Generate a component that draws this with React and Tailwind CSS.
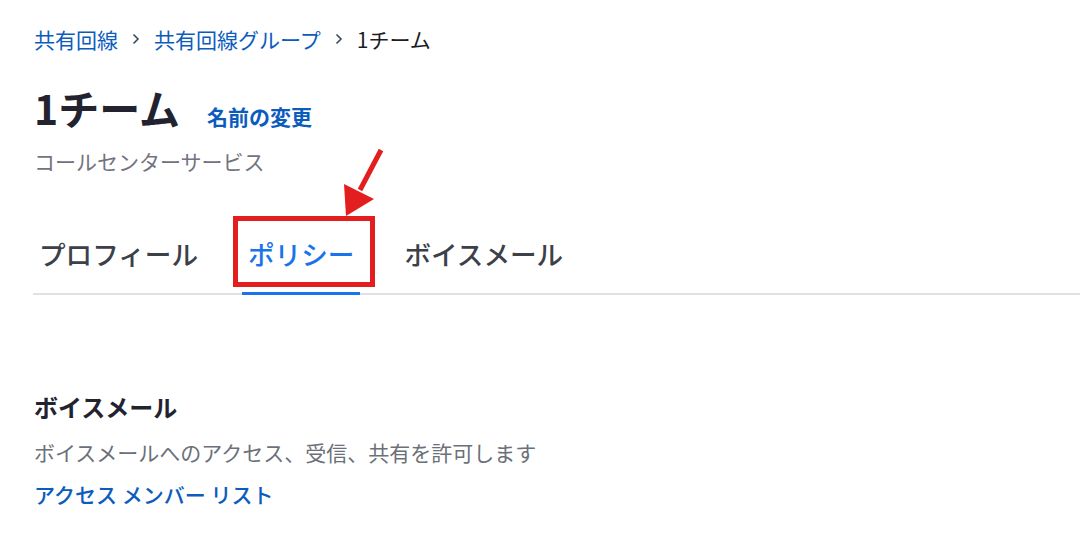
// App.jsx
import React from "react";

const Chevron = () => (
  <svg width="8" height="12" viewBox="0 0 8 12" className="mx-[14px] shrink-0">
    <path d="M1.5 1.5 L6 6 L1.5 10.5" fill="none" stroke="#3d4a5c" strokeWidth="1.6" />
  </svg>
);

const tabs = [
  { label: "プロフィール", active: false },
  { label: "ポリシー", active: true },
  { label: "ボイスメール", active: false },
];

const App = () => {
  return (
    <div
      className="relative w-[1080px] h-[546px] overflow-hidden bg-white"
      style={{ fontFamily: '"Noto Sans CJK JP", "Noto Sans", sans-serif' }}
    >
      <div className="pt-[24px] pl-[34px]">
        {/* breadcrumb */}
        <nav className="flex items-center text-[21px] leading-[30px]">
          <span className="text-[#0b5cbd]">共有回線</span>
          <Chevron />
          <span className="text-[#0b5cbd]">共有回線グループ</span>
          <Chevron />
          <span className="text-[#1d1d1f]">1チーム</span>
        </nav>

        {/* title */}
        <div className="mt-[29px] flex items-baseline gap-[27px]">
          <h1 className="text-[41px] leading-[48px] font-bold text-[#23232f]">1チーム</h1>
          <span className="text-[21px] font-semibold text-[#0b5cbd]">名前の変更</span>
        </div>
        <p className="mt-[13px] text-[21px] leading-[30px] text-[#737380]">コールセンターサービス</p>

        {/* tabs */}
        <div className="mt-[60px] flex gap-[38px] border-b-2 border-[#dfe1e5] -ml-[1px]">
          {tabs.map((t) => (
            <div
              key={t.label}
              className={
                t.active
                  ? "-mb-[2px] px-[6px] pb-[20px] border-b-[3px] border-[#1a73e8] text-[26.6px] leading-[36px] text-[#1a73e8] font-medium"
                  : "-mb-[2px] px-[6px] pb-[20px] border-b-[3px] border-transparent text-[26.6px] leading-[36px] text-[#3c4048] font-medium"
              }
            >
              {t.label}
            </div>
          ))}
        </div>

        {/* voicemail section */}
        <h2 className="mt-[96px] text-[24px] leading-[32px] font-bold text-[#23232f]">ボイスメール</h2>
        <p className="mt-[14px] text-[21px] leading-[30px] text-[#6b7079]">
          ボイスメールへのアクセス、受信、共有を許可します
        </p>
        <p className="mt-[12px] text-[21px] leading-[30px] font-medium text-[#0b5cbd]">
          アクセス メンバー リスト
        </p>
      </div>

      {/* annotation: red box */}
      <div className="absolute left-[233px] top-[216px] w-[142px] h-[71px] border-[5px] border-[#e31e1e]" />

      {/* annotation: arrow */}
      <svg className="absolute left-0 top-0" width="1080" height="546">
        <line x1="381" y1="150" x2="360" y2="190" stroke="#e31e1e" strokeWidth="5" />
        <polygon points="346,216 344,184 374,199" fill="#e31e1e" />
      </svg>
    </div>
  );
};

export default App;
